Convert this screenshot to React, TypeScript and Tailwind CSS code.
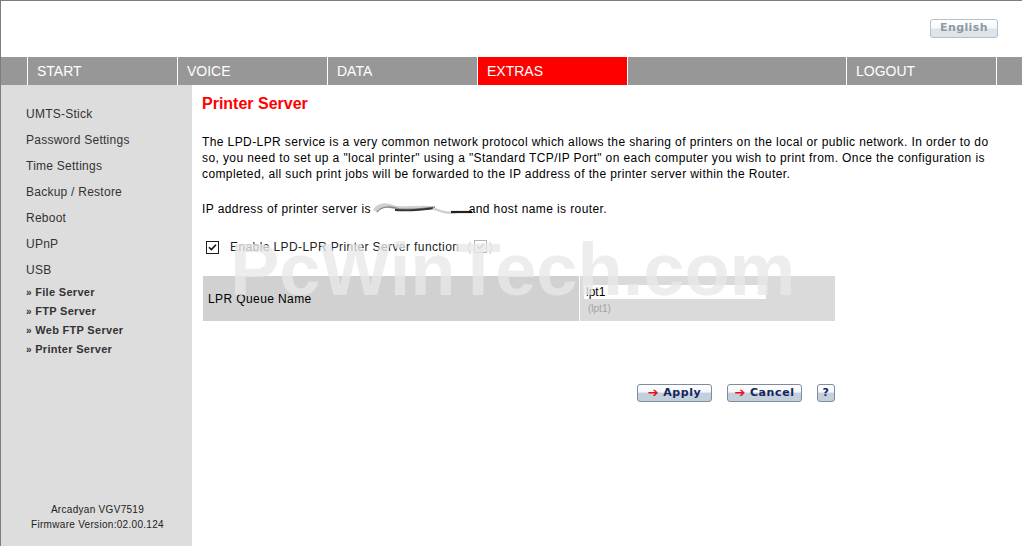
import React from "react";

const NAV = [
  { label: "START", w: "w-[150px]" },
  { label: "VOICE", w: "w-[150px]" },
  { label: "DATA", w: "w-[150px]" },
  { label: "EXTRAS", w: "w-[150px]", active: true },
  { label: "", w: "w-[219px]" },
  { label: "LOGOUT", w: "w-[150px]" },
];

const MENU = ["UMTS-Stick", "Password Settings", "Time Settings", "Backup / Restore", "Reboot", "UPnP", "USB"];
const SUBMENU = ["File Server", "FTP Server", "Web FTP Server", "Printer Server"];

// small checkbox drawn by hand so it looks like the old windows one
function Check({ disabled }: { disabled?: boolean }) {
  return (
    <span
      className={`inline-flex w-[13px] h-[13px] items-center justify-center border bg-white ${
        disabled ? "border-[#b5b5b5]" : "border-[#1c1c1c]"
      }`}
    >
      <svg width="9" height="9" viewBox="0 0 9 9">
        <path d="M1 4.2 L3.4 6.6 L8 1.8" fill="none" stroke={disabled ? "#a8a8a8" : "#111"} strokeWidth="1.6" />
      </svg>
    </span>
  );
}

function RouterButton({ label, arrow = true, w }: { label: string; arrow?: boolean; w: string }) {
  return (
    <button
      className={`${w} h-[18px] flex items-center justify-center gap-[4px] rounded-[3px] border border-[#7f8c99] bg-[linear-gradient(to_bottom,#ffffff_0%,#f4f6f8_45%,#c3d0db_50%,#c3d0db_100%)] font-['DejaVu_Sans',sans-serif] text-[11px] font-bold tracking-[0.6px] text-[#14265e]`}
    >
      {arrow && <span className="text-[#e8101a] text-[13px] font-bold leading-none -mt-[1px]">➔</span>}
      {label}
    </button>
  );
}

export default function App() {
  return (
    <div className="w-[1022px] h-[546px] overflow-hidden border-t border-l border-[#7d7d7d] bg-white font-['Liberation_Sans',Arial,sans-serif] flex flex-col">
      {/* Header */}
      <div className="h-[56px] flex justify-end items-start pt-[18px] pr-[24px] shrink-0">
        <button className="w-[68px] h-[19px] rounded-[3px] border border-[#b3bfca] bg-[linear-gradient(to_bottom,#ffffff_0%,#f7f9fa_45%,#dde4ea_55%,#dde4ea_100%)] font-['DejaVu_Sans',sans-serif] text-[11px] font-bold tracking-[0.4px] text-[#8d9aa6]">
          English
        </button>
      </div>

      {/* Navigation */}
      <div className="h-[28px] flex bg-[#979797] shrink-0">
        <div className="w-[26px] shrink-0" />
        {NAV.map((n, i) => (
          <div
            key={i}
            className={`${n.w} shrink-0 border-l border-white pl-[9px] flex items-center text-[14px] text-white ${
              n.active ? "bg-[#ff0000]" : ""
            }`}
          >
            {n.label}
          </div>
        ))}
        <div className="flex-1 border-l border-white" />
      </div>

      {/* Body */}
      <div className="flex-1 flex min-h-0">
        {/* Sidebar */}
        <div className="w-[191px] shrink-0 bg-[#dddddd] flex flex-col justify-between pt-[16px] pb-[14px]">
          <div className="pl-[25px] text-[#333333]">
            {MENU.map((m) => (
              <div key={m} className="h-[26px] leading-[26px] text-[12px] tracking-[0.25px]">
                {m}
              </div>
            ))}
            {SUBMENU.map((s) => (
              <div key={s} className="h-[19px] leading-[19px] text-[11px] font-bold tracking-[0.3px] text-[#333333]">
                <span className="text-[10px]">»</span> {s}
              </div>
            ))}
          </div>
          <div className="text-center text-[10px] leading-[15px] tracking-[0.3px] text-[#222222] pl-[2px]">
            <div>Arcadyan VGV7519</div>
            <div>Firmware Version:02.00.124</div>
          </div>
        </div>

        {/* Content */}
        <div className="relative flex-1 pl-[10px] pr-[20px] pt-[9px] tracking-[0.4px]">
          <h1 className="text-[16px] leading-[20px] font-bold tracking-normal text-[#ff0000]">Printer Server</h1>

          <p className="mt-[20px] text-[12px] leading-[16px] text-black">
            The LPD-LPR service is a very common network protocol which allows the sharing of printers on the local or public network. In order to do so, you need to set up a "local printer" using a "Standard TCP/IP Port" on each computer you wish to print from. Once the configuration is completed, all such print jobs will be forwarded to the IP address of the printer server within the Router.
          </p>

          <p className="mt-[19px] text-[12px] leading-[16px] text-black flex items-center">
            <span>IP address of printer server is&nbsp;</span>
            <svg width="100" height="14" viewBox="0 0 100 14" className="-ml-[2px] -mr-[4px]">
              <path d="M2 9 C4 3, 12 2, 20 5 S40 5, 58 6" fill="none" stroke="#d0d0d0" strokeWidth="4" />
              <path d="M4 10 C8 4, 18 4, 26 7 C40 8, 52 6, 62 5" fill="none" stroke="#8a8a8a" strokeWidth="1.4" />
              <path d="M22 8 C34 9, 48 8, 62 6" fill="none" stroke="#333333" strokeWidth="1.8" />
              <path d="M60 6 C68 10, 76 12, 84 10" fill="none" stroke="#cfcfcf" strokeWidth="2.5" />
              <path d="M78 10 L99 10" fill="none" stroke="#222222" strokeWidth="2.2" />
            </svg>
            <span>and host name is router.</span>
          </p>

          <div className="mt-[22px] h-[16px] flex items-center pl-[4px] text-[12px] text-[#222222]">
            <Check />
            <span className="ml-[11px]">Enable LPD-LPR Printer Server function</span>
            <span className="ml-[8px] text-[#c8c8c8]">(</span>
            <span className="mx-[2px]">
              <Check disabled />
            </span>
            <span className="text-[#c8c8c8]">)</span>
          </div>

          {/* Table */}
          <div className="mt-[21px] ml-[1px] w-[632px] h-[45px] flex">
            <div className="w-[376px] bg-[#d0d1d0] flex items-center pl-[5px] text-[12px] text-black">
              LPR Queue Name
            </div>
            <div className="w-[256px] border-l border-white bg-[#dadada] pl-[4px] pt-[9px]">
              <div className="w-[182px] h-[14px] bg-white text-[12px] leading-[14px] pl-[2px] tracking-normal text-black">lpt1</div>
              <div className="mt-[4px] pl-[4px] text-[10px] leading-[12px] tracking-normal text-[#a3a3a3]">(lpt1)</div>
            </div>
          </div>

          {/* Buttons */}
          <div className="mt-[63px] ml-[1px] w-[632px] flex justify-end gap-[15px] tracking-normal">
            <RouterButton label="Apply" w="w-[75px]" />
            <RouterButton label="Cancel" w="w-[75px]" />
            <RouterButton label="?" arrow={false} w="w-[18px]" />
          </div>

          {/* watermark over the page */}
          <div className="pointer-events-none absolute left-[38px] top-[148px] text-[74px] leading-none font-bold tracking-normal text-[rgba(232,232,232,0.78)] whitespace-nowrap">
            PcWinTech.com
          </div>
        </div>
      </div>
    </div>
  );
}
